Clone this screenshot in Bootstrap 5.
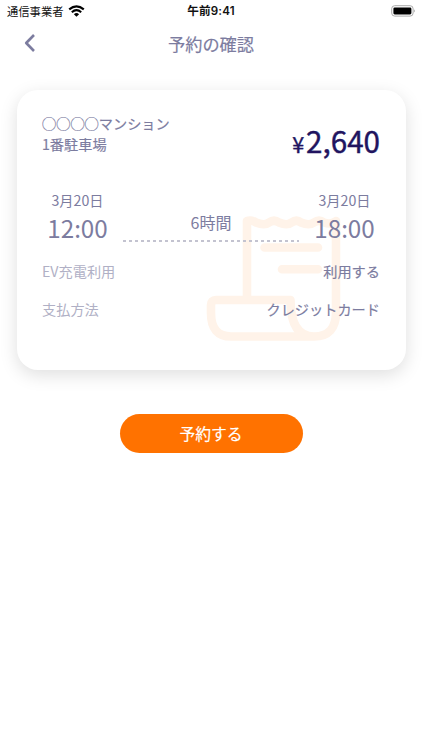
<!DOCTYPE html>
<html lang="ja">
<head>
<meta charset="utf-8">
<meta name="viewport" content="width=device-width, initial-scale=1">
<title>予約の確認</title>
<link href="https://cdn.jsdelivr.net/npm/bootstrap@5.3.0/dist/css/bootstrap.min.css" rel="stylesheet">
<style>
body{font-family:"Noto Sans CJK JP",sans-serif;color:#7c7c9f;background:#fff;font-size:14.2px;line-height:21px;overflow:hidden}
.status-bar{height:22px;color:#111;font-size:11.3px;line-height:22px;padding:0 6px 0 7px}
.status-bar>div{flex:1 1 0}
.clock{font-family:Inter,"Noto Sans CJK JP",sans-serif;font-weight:600;font-size:11.6px;letter-spacing:.2px;margin-right:1px}
.page-head{height:44px;margin-bottom:24px;font-size:17.2px}
.page-head span{margin-top:-2px}
.medium{-webkit-text-stroke:.18px currentColor}
.back{left:23px;top:11px;line-height:0;color:#7c7c9f}
.booking{margin:0 16.5px;height:280px;border-radius:21px;box-shadow:0 5px 18px rgba(0,0,0,.13);padding:23px 25.5px 0;--bs-card-bg:#fff}
.receipt{left:189.5px;top:124px}
.price{color:#21145f;font-size:29.6px;line-height:44px;margin-top:6px;-webkit-text-stroke:.4px currentColor}
.yen{font-size:21.5px;margin-right:2px}
.trip{margin-top:25.5px;height:53px}
.stop{width:71px}
.stop .hour{font-size:24.2px;line-height:33px}
.stop>div:first-child{margin-top:-2px}
.span-line{font-size:16px;line-height:24px;padding-top:18.5px}
.dashes{height:2px;margin:6px 10px 0;background:repeating-linear-gradient(90deg,#c3c3d0 0 3.4px,transparent 3.4px 6px)}
.details{margin-top:16.5px}
.detail{height:38px}
.detail dt{font-weight:400;color:#b0b0c5}
.reserve{--bs-btn-bg:#ff7200;--bs-btn-hover-bg:#ed6900;--bs-btn-color:#fff;--bs-btn-hover-color:#fff;width:183px;height:39px;margin-top:44px;font-size:15.8px;line-height:24px}
</style>
<script src="https://cdn.jsdelivr.net/npm/bootstrap@5.3.0/dist/js/bootstrap.bundle.min.js" defer></script>
</head>
<body>
<div class="status-bar d-flex align-items-center">
  <div class="d-flex align-items-center"><span>通信事業者</span>
    <svg class="ms-1" width="17" height="12" viewBox="0 0 17 12" fill="none" stroke="#000" stroke-width="2.1"><path d="M1.2 4.4Q8.5-1.8 15.8 4.4M3.8 7.2Q8.5 3.2 13.2 7.2"/><path d="M5.9 9.2Q8.5 7 11.1 9.2L8.5 11.8Z" fill="#000" stroke="none"/></svg>
  </div>
  <span class="clock text-center">午前9:41</span>
  <div class="d-flex justify-content-end">
    <svg width="25" height="12" viewBox="0 0 25 12"><rect x=".7" y=".7" width="21.4" height="10.4" rx="3" fill="#fff" stroke="#aaa"/><rect x="2.4" y="2.4" width="18" height="7" rx="1.3"/><path d="M23.3 4.2q1.5 1.7 0 3.4z" fill="#888"/></svg>
  </div>
</div>
<header class="page-head position-relative d-flex align-items-center justify-content-center">
  <a class="back position-absolute" href="#" aria-label="戻る"><svg width="14" height="20" viewBox="0 0 14 20" fill="none" stroke="currentColor" stroke-width="2.6" stroke-linejoin="round"><path d="M11 2 3.2 10 11 18"/></svg></a>
  <span class="medium">予約の確認</span>
</header>
<main>
  <section class="card border-0 booking">
    <svg class="receipt position-absolute" width="136" height="130" viewBox="206 214 136 130" fill="none" stroke="#fff3e9" stroke-width="8.6" stroke-linecap="round" stroke-linejoin="round"><path d="M247 300V221Q251 219.500 256 222.500Q264.500 226 269 222.500Q274 219 279 222.500Q287 226 291.500 222.500Q296.500 219 301 222.500Q309 226 314 222.500Q319 219 324 222.500Q331 225 336 221V312Q336 336.500 314 336.500H231Q211 336.500 211 313V305Q211 300 216 300H290.500Q290.500 336.500 314 336.500M264.500 247.500H318M282 269.300H318"/></svg>
    <div class="d-flex justify-content-between position-relative">
      <div class="medium">◯◯◯◯マンション<br>1番駐車場</div>
      <div class="price"><span class="yen">¥</span>2,640</div>
    </div>
    <div class="trip d-flex position-relative">
      <div class="stop text-center"><div>3月20日</div><div class="hour">12:00</div></div>
      <div class="span-line flex-grow-1 text-center">6時間<div class="dashes"></div></div>
      <div class="stop text-center"><div>3月20日</div><div class="hour">18:00</div></div>
    </div>
    <dl class="details mb-0 position-relative">
      <div class="detail d-flex justify-content-between"><dt>EV充電利用</dt><dd class="medium mb-0">利用する</dd></div>
      <div class="detail d-flex justify-content-between"><dt>支払方法</dt><dd class="medium mb-0">クレジットカード</dd></div>
    </dl>
  </section>
  <div class="text-center"><button type="button" class="btn reserve rounded-pill border-0 p-0"><span class="medium">予約する</span></button></div>
</main>
</body>
</html>
